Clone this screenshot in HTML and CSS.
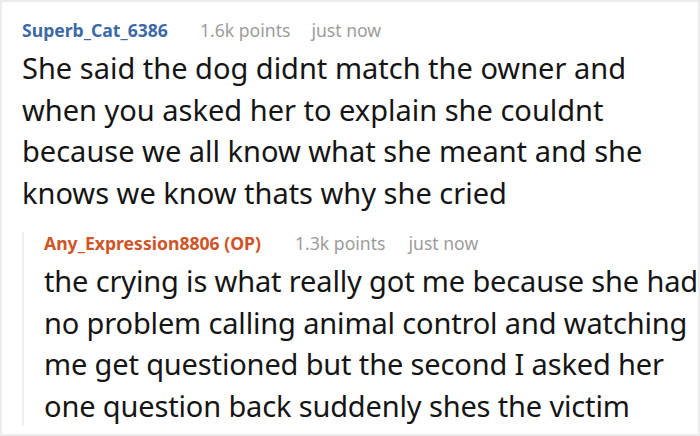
FILE: index.html
```html
<!DOCTYPE html>
<html>
<head>
<meta charset="utf-8">
<link rel="stylesheet" href="styles.css">
</head>
<body>
<div class="frame">
  <div class="comment">
    <div class="meta">
      <span class="user user-blue">Superb_Cat_6386</span>
      <span class="points">1.6k points</span>
      <span class="time">just now</span>
    </div>
    <p class="body">She said the dog didnt match the owner and when you asked her to explain she couldnt because we all know what she meant and she knows we know thats why she cried</p>
    <div class="reply">
      <div class="meta reply-meta">
        <span class="user user-op">Any_Expression8806 (OP)</span>
        <span class="points">1.3k points</span>
        <span class="time">just now</span>
      </div>
      <p class="body reply-body">the crying is what really got me because she had no problem calling animal control and watching me get questioned but the second I asked her one question back suddenly shes the victim</p>
    </div>
  </div>
</div>
</body>
</html>
```
FILE: styles.css
```css
html, body {
  margin: 0;
  padding: 0;
  background: #fff;
}
.frame {
  width: 700px;
  height: 436px;
  box-sizing: border-box;
  border: 2px solid #ececec;
  overflow: hidden;
  font-family: "Noto Sans", "Open Sans", sans-serif;
}
.comment {
  padding: 17px 0 0 20px;
}
.meta {
  display: flex;
  font-size: 17.6px;
  line-height: 22px;
  white-space: nowrap;
}
.user {
  font-weight: bold;
}
.user-blue {
  color: #3d69a6;
  margin-right: 32px;
}
.user-op {
  color: #cf5428;
  margin-right: 34px;
}
.points, .time {
  color: #9c9c9c;
}
.points {
  margin-right: 21px;
}
.reply-meta .points {
  margin-right: 23px;
}
.body {
  margin: 6px 0 0 0;
  font-size: 29px;
  line-height: 41.5px;
  color: #151515;
}
.reply {
  margin-top: 27px;
  border-left: 2px solid #efefef;
  padding-left: 20px;
}
.reply-meta {
  margin-top: -8px;
}
.reply-body {
  letter-spacing: -0.15px;
}
```
